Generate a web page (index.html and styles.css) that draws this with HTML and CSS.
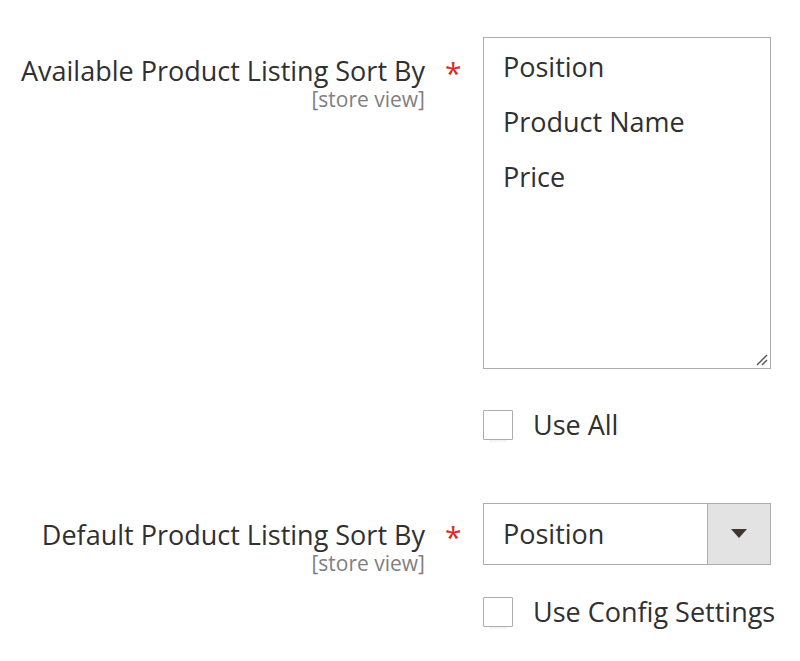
FILE: index.html
```html
<!DOCTYPE html>
<html>
<head>
<meta charset="utf-8">
<link rel="stylesheet" href="styles.css">
</head>
<body>
<div class="form">
  <div class="field field-multi">
    <div class="label">
      <span class="label-text">Available Product Listing Sort By</span>
      <span class="scope">[store view]</span>
    </div>
    <div class="req">*</div>
    <div class="control">
      <div class="multiselect">
        <div class="opt">Position</div>
        <div class="opt">Product Name</div>
        <div class="opt">Price</div>
        <svg class="grip" width="14" height="14" viewBox="0 0 14 14"><path d="M13 3 L3 13 M13 8 L8 13" stroke="#555" stroke-width="1.4" fill="none"/></svg>
      </div>
      <label class="check"><span class="box"></span><span class="check-text">Use All</span></label>
    </div>
  </div>
  <div class="field field-select">
    <div class="label">
      <span class="label-text">Default Product Listing Sort By</span>
      <span class="scope">[store view]</span>
    </div>
    <div class="req">*</div>
    <div class="control">
      <div class="select">
        <span class="select-value">Position</span>
        <span class="select-btn"><svg width="16" height="10" viewBox="0 0 16 10"><path d="M0 0 H16 L8 9 Z" fill="#41362f"/></svg></span>
      </div>
      <label class="check"><span class="box"></span><span class="check-text">Use Config Settings</span></label>
    </div>
  </div>
</div>
</body>
</html>
```
FILE: styles.css
```css
html, body {
  margin: 0;
  padding: 0;
  background: #fff;
}
body {
  font-family: "Open Sans", "Liberation Sans", sans-serif;
  color: #303030;
  width: 800px;
  height: 661px;
  overflow: hidden;
}
.form {
  padding-top: 37px;
  display: flex;
  flex-direction: column;
  gap: 60px;
}
.field {
  display: grid;
  grid-template-columns: 425px 58px 288px;
}
.label {
  display: flex;
  flex-direction: column;
  align-items: flex-end;
  padding-top: 19px;
}
.field-select .label {
  padding-top: 17px;
}
.label-text {
  font-size: 27px;
  line-height: 30px;
  color: #303030;
  white-space: nowrap;
}
.scope {
  margin-top: 2px;
  font-size: 21px;
  line-height: 22px;
  color: #808080;
  white-space: nowrap;
}
.req {
  color: #e22626;
  font-size: 30px;
  padding-top: 19px;
  padding-left: 20px;
  line-height: 34px;
}
.field-select .req {
  padding-top: 17px;
}
.control {
  display: flex;
  flex-direction: column;
}
.multiselect {
  position: relative;
  box-sizing: border-box;
  height: 332px;
  border: 1px solid #adadad;
  padding: 1px 19px;
}
.opt {
  font-size: 27px;
  line-height: 55px;
  height: 55px;
  color: #303030;
}
.grip {
  position: absolute;
  right: 2px;
  bottom: 2px;
}
.check {
  display: flex;
  align-items: center;
  gap: 20px;
  margin-top: 38px;
  white-space: nowrap;
}
.box {
  flex: none;
  border: 1px solid #adadad;
  border-radius: 1px;
  background: #fff;
  box-sizing: border-box;
  width: 30px;
  height: 30px;
  box-shadow: 0 8px 0 -6px #f4f4f4;
}
.check-text {
  font-size: 27px;
  line-height: 36px;
  color: #303030;
}
.select {
  display: flex;
  height: 62px;
  border: 1px solid #adadad;
  box-sizing: border-box;
}
.select-value {
  flex: 1;
  font-size: 27px;
  line-height: 60px;
  padding-left: 19px;
}
.select-btn {
  width: 62px;
  background: #e3e3e3;
  border-left: 1px solid #adadad;
  display: flex;
  align-items: center;
  justify-content: center;
}
.field-select .check {
  margin-top: 29px;
}
```
